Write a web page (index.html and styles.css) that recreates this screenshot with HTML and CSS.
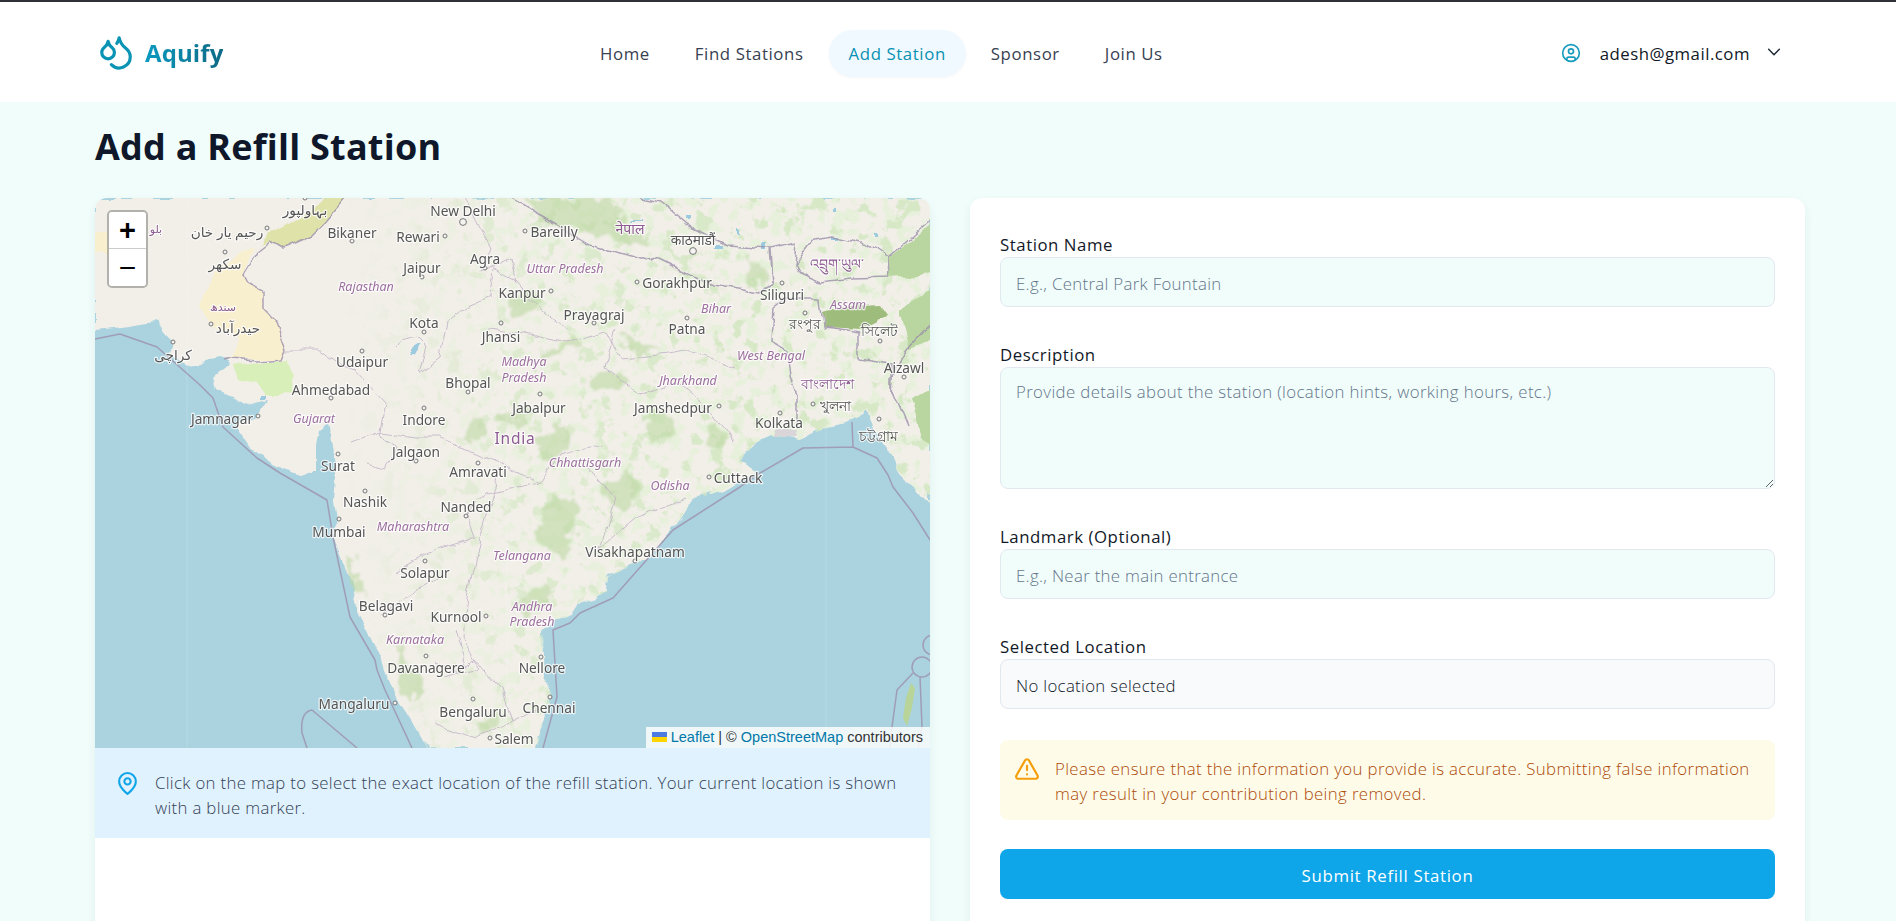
FILE: index.html
```html
<!DOCTYPE html>
<html lang="en">
<head>
<meta charset="utf-8">
<title>Aquify - Add a Refill Station</title>
<link rel="stylesheet" href="styles.css">
</head>
<body>
<header class="site-header">
  <a class="logo" href="#">
    <svg class="logo-icon" viewBox="0 0 24 24"><path d="M7 16.3c2.2 0 4-1.83 4-4.05 0-1.16-.57-2.26-1.71-3.19S7.29 6.75 7 5.3c-.29 1.45-1.14 2.84-2.29 3.76S3 11.1 3 12.25c0 2.22 1.8 4.05 4 4.05z"/><path d="M12.56 6.6A10.97 10.97 0 0 0 14 3.02c.5 2.5 2 4.9 4 6.5s3 3.5 3 5.5a6.98 6.98 0 0 1-11.91 4.97"/></svg>
    <span class="logo-text">Aquify</span>
  </a>
  <nav class="main-nav">
    <a href="#">Home</a>
    <a href="#">Find Stations</a>
    <a href="#" class="active">Add Station</a>
    <a href="#">Sponsor</a>
    <a href="#">Join Us</a>
  </nav>
  <div class="user">
    <svg class="user-icon" viewBox="0 0 24 24"><circle cx="12" cy="12" r="10"/><circle cx="12" cy="10" r="3"/><path d="M7 20.662V19a2 2 0 0 1 2-2h6a2 2 0 0 1 2 2v1.662"/></svg>
    <span class="user-mail">adesh@gmail.com</span>
    <svg class="chevron" viewBox="0 0 24 24"><path d="m4 8 8 8 8-8"/></svg>
  </div>
</header>

<main class="page">
  <h1>Add a Refill Station</h1>
  <div class="columns">
    <section class="card map-card">
      <div class="map">
        <svg class="map-art" viewBox="0 0 835 550" width="835" height="550">
          <defs>
            <clipPath id="land-clip"><path d="M0 132 28 129 52 125 62 124 70 137 77 144 72 158 92 167 128 160 135 167 120 180 123 192 152 207 173 202 165 218 140 226 155 248 180 268 205 276 222 270 222 248 225 232 233 226 236 245 243 262 243 278 242 282 240 302 243 322 238 335 248 362 258 395 262 412 278 445 288 462 295 485 305 505 322 532 332 550 442 550 448 525 457 499 450 479 448 435 460 422 473 419 482 405 512 394 513 379 535 369 552 359 582 325 598 302 628 292 648 280 660 272 645 262 660 245 675 238 705 242 718 235 762 220 772 210 778 227 795 250 802 272 815 285 835 305 835 0 0 0Z"/></clipPath>
            <filter id="rough" filterUnits="userSpaceOnUse" x="-20" y="-20" width="875" height="590">
              <feTurbulence type="fractalNoise" baseFrequency=".035" numOctaves="4" seed="3" result="n"/>
              <feDisplacementMap in="SourceGraphic" in2="n" scale="11" xChannelSelector="R" yChannelSelector="G"/>
            </filter>
            <filter id="organic" filterUnits="userSpaceOnUse" x="-20" y="-20" width="875" height="590">
              <feTurbulence type="fractalNoise" baseFrequency=".06" numOctaves="4" seed="8" result="n"/>
              <feDisplacementMap in="SourceGraphic" in2="n" scale="26" xChannelSelector="R" yChannelSelector="G"/>
              <feGaussianBlur stdDeviation=".8"/>
            </filter>
            <filter id="mottle" x="0" y="0" width="100%" height="100%">
              <feTurbulence type="fractalNoise" baseFrequency=".08" numOctaves="5" seed="11"/>
              <feColorMatrix type="matrix" values="0 0 0 0 .79  0 0 0 0 .87  0 0 0 0 .70  9 0 0 0 -4.75"/>
            </filter>
            <filter id="mottle-dark" x="0" y="0" width="100%" height="100%">
              <feTurbulence type="fractalNoise" baseFrequency=".06" numOctaves="5" seed="29"/>
              <feColorMatrix type="matrix" values="0 0 0 0 .68  0 0 0 0 .81  0 0 0 0 .57  10 0 0 0 -5.9"/>
            </filter>
            <linearGradient id="east-fade" x1="0" x2="1" y1="0" y2="0">
              <stop offset=".3" stop-color="#fff" stop-opacity=".02"/>
              <stop offset=".5" stop-color="#fff" stop-opacity=".75"/>
              <stop offset=".75" stop-color="#fff" stop-opacity="1"/>
            </linearGradient>
            <mask id="east-mask"><rect width="835" height="550" fill="url(#east-fade)"/></mask>
          </defs>

          <rect class="sea" width="835" height="550"/>

          <g filter="url(#rough)">
            <path class="land-fill" d="M0 132 28 129 52 125 62 124 70 137 77 144 72 158 92 167 128 160 135 167 120 180 123 192 152 207 173 202 165 218 140 226 155 248 180 268 205 276 222 270 222 248 225 232 233 226 236 245 243 262 243 278 242 282 240 302 243 322 238 335 248 362 258 395 262 412 278 445 288 462 295 485 305 505 322 532 332 550 442 550 448 525 457 499 450 479 448 435 460 422 473 419 482 405 512 394 513 379 535 369 552 359 582 325 598 302 628 292 648 280 660 272 645 262 660 245 675 238 705 242 718 235 762 220 772 210 778 227 795 250 802 272 815 285 835 305 835 0 0 0Z"/>
          </g>

          <g clip-path="url(#land-clip)">
            <g mask="url(#east-mask)">
              <rect width="835" height="550" filter="url(#mottle)"/>
              <rect width="835" height="550" filter="url(#mottle-dark)"/>
            </g>
            <g class="patches" filter="url(#organic)">
              <path d="M413 95 440 90 442 110 415 118Z"/><path d="M445 155 480 140 487 148 448 162Z"/>
              <path d="M495 180 530 172 535 185 500 192Z"/><path d="M405 218 435 210 432 222 402 228Z"/>
              <path d="M440 245 470 225 478 245 452 262Z"/><path d="M550 220 572 210 578 235 555 240Z"/>
              <path d="M610 230 628 226 630 245 614 250Z"/><path d="M372 232 395 220 390 238 368 242Z"/>
              <path d="M445 315 475 295 484 325 468 360 445 345Z"/><path d="M505 295 535 268 545 295 522 320Z"/>
              <path d="M302 445 316 470 328 500 320 505 302 470Z"/>
              <path d="M380 525 400 510 410 520 390 535Z"/><path d="M425 0H515L555 48 500 38 450 20Z"/>
              <path d="M565 65 640 90 600 80Z"/><path d="M658 62 676 80 652 88Z"/>
              <path d="M425 400 448 385 455 405 432 425Z"/><path d="M258 358 270 392 262 396 254 365Z"/>
              <path d="M525 138 565 150 540 160Z"/>
            </g>
          </g>

          <g filter="url(#rough)">
            <path class="olive" d="M229 0H252L228 27 215 40 188 52 175 44 165 47 175 34 208 17Z"/>
            <path class="sand" d="M158 47 148 77 152 85 168 94 168 110 182 124 193 150 188 160 135 160 145 140 115 124 105 107 115 87 118 77 142 57Z"/>
            <path class="sand" d="M0 34H14V56H0Z"/>
            <path class="lime" d="M138 167 195 160 198 194 182 198 170 198 160 184 142 180Z"/>
            <path class="forest" d="M793 60 840 22V76L793 79Z"/>
            <path class="forest-d" d="M728 114 740 110 785 107 792 117 765 131 728 129Z"/>
            <path class="forest" d="M840 90 805 112 815 150 840 140Z"/>
            <path class="forest" d="M815 200 840 190V250L825 240Z"/>
            <path class="delta" d="M680 232 700 232 698 240 678 240Z"/>
            <g class="water">
              <path d="M590 18h5v4h-5zM640 30h3v4h-3zM535 20h10v2h-10zM622 47h6v4h-6zM668 44h4v8h-4zM736 37h8v3h-8zM782 35h3v4h-3zM737 12h4v3h-4z"/>
              <path d="M317 150c5-6 9-5 7 2s-7 8-7-2zM165 198h6v3h-6z"/>
            </g>
            <g class="borders land-borders">
              <path d="M252 -1 228 27 215 40 188 52 175 44 162 54 148 77 152 85 168 94 168 110 182 124 192 150 188 160 162 162 135 160 127 162"/>
              <path d="M412 0 448 20 495 47 558 64 565 60 618 87 665 95 678 87 675 50 632 47 592 27 565 4 545 0"/>
              <path d="M698 67 718 40 738 37 768 44 792 60 793 79 758 80 725 84 702 74ZM792 60 835 22M678 87 676 50 700 44 698 67"/>
              <path d="M677 110 690 100 725 100 728 129 765 134 765 160 798 165 798 197 812 230M677 110 675 144 692 154 695 177 702 197 702 230"/>
              <path d="M835 125 812 150 800 170 798 197"/>
            </g>
            <g class="state-borders">
              <path d="M192 152 222 152 240 165 260 172 290 205 284 240 302 250 290 270 270 265"/>
              <path d="M300 150 307 142 320 138 332 150 325 175 345 160 352 125 372 110 395 100 398 70 420 82 445 110 470 130"/>
              <path d="M395 130 440 138 470 145 510 132 525 160 575 155 590 152 640 170"/>
              <path d="M520 130 510 170 545 195 585 185 615 210 640 245"/>
              <path d="M420 85 415 60 385 75 395 50 385 30 370 0"/>
              <path d="M258 245 285 235 320 240 345 240 405 265 445 285 465 255 505 245"/>
              <path d="M300 375 345 350 380 340 372 315 390 295 445 285"/>
              <path d="M405 270 385 340 372 400 368 440 385 470 350 480"/>
              <path d="M285 415 345 380M360 432 372 470"/>
              <path d="M495 270 520 300 505 350 540 320 590 300"/>
              <path d="M340 465 365 475 380 460 405 490 415 525 445 510"/>
              <path d="M340 525 380 540 415 525"/>
            </g>
          </g>

          <g class="borders">
            <path d="M0 141 25 136 62 149 105 187 118 200 128 229 162 260 185 275 232 302 238 339 255 419 280 462 282 472 290 492 317 550"/>
            <path d="M262 550 217 512Q205 514 207 535L212 550"/>
            <path d="M448 550 462 499 458 432 475 425 485 415 518 400 578 332 645 289 665 275 708 250 758 249 782 260 793 277 798 289 818 315 835 342M757 224 758 249"/>
            <path d="M795 550 797 529 802 492 818 475M825 479 827 529 823 550"/>
            <circle cx="827" cy="469" r="10"/><circle cx="838" cy="447" r="10"/>
          </g>
          <path class="seam" d="M92 0V550M412 0V550M731 0V550"/>
          <path class="island" d="M816 485 820 490 817 510 812 528 808 520 811 500Z"/>

          <g class="dots">
            <circle cx="368" cy="24" r="3.4"/><circle cx="257" cy="43" r="2"/><circle cx="350" cy="38" r="2"/><circle cx="430" cy="33" r="2"/><circle cx="390" cy="70" r="2"/><circle cx="327" cy="79" r="2"/><circle cx="456" cy="93" r="2"/><circle cx="542" cy="84" r="2"/><circle cx="598" cy="53" r="3.4"/><circle cx="687" cy="85" r="2"/><circle cx="710" cy="115" r="2"/><circle cx="785" cy="143" r="2"/><circle cx="499" cy="125" r="2"/><circle cx="592" cy="120" r="2"/><circle cx="329" cy="134" r="2"/><circle cx="406" cy="125" r="2"/><circle cx="116" cy="126" r="2"/><circle cx="78" cy="144" r="2"/><circle cx="130" cy="54" r="2"/><circle cx="172" cy="30" r="2"/><circle cx="210" cy="0" r="2"/><circle cx="267" cy="153" r="2"/><circle cx="373" cy="194" r="2"/><circle cx="236" cy="200" r="2"/><circle cx="809" cy="179" r="2"/><circle cx="718" cy="206" r="2"/><circle cx="624" cy="208" r="2"/><circle cx="445" cy="196" r="2"/><circle cx="685" cy="215" r="2"/><circle cx="784" cy="221" r="2"/><circle cx="163" cy="218" r="2"/><circle cx="329" cy="210" r="2"/><circle cx="321" cy="263" r="2"/><circle cx="383" cy="265" r="2"/><circle cx="243" cy="256" r="2"/><circle cx="614" cy="279" r="2"/><circle cx="270" cy="293" r="2"/><circle cx="371" cy="318" r="2"/><circle cx="244" cy="321" r="2"/><circle cx="540" cy="363" r="2"/><circle cx="330" cy="363" r="2"/><circle cx="290" cy="417" r="2"/><circle cx="391" cy="418" r="2"/><circle cx="331" cy="458" r="2"/><circle cx="446" cy="459" r="2"/><circle cx="300" cy="505" r="2"/><circle cx="378" cy="501" r="2"/><circle cx="455" cy="499" r="2"/><circle cx="395" cy="540" r="2"/>
          </g>

          <g class="city">
            <text x="368" y="12">New Delhi</text><text x="257" y="34">Bikaner</text><text x="323" y="38">Rewari</text><text x="459" y="33">Bareilly</text><text x="390" y="60">Agra</text><text x="327" y="69">Jaipur</text><text x="427" y="94">Kanpur</text><text x="582" y="84">Gorakhpur</text><text x="598" y="41">काठमाडौं</text><text x="687" y="96">Siliguri</text><text x="710" y="125">রংপুর</text><text x="784" y="132">সিলেট</text><text x="499" y="116">Prayagraj</text><text x="592" y="130">Patna</text><text x="329" y="124">Kota</text><text x="406" y="138">Jhansi</text><text x="143" y="129">حیدرآباد</text><text x="78" y="156">کراچی</text><text x="130" y="65">سکھر</text><text x="132" y="33">رحیم یار خان</text><text x="210" y="11">بہاولپور</text><text x="267" y="163">Udaipur</text><text x="373" y="184">Bhopal</text><text x="236" y="191">Ahmedabad</text><text x="809" y="169">Aizawl</text><text x="740" y="207">খুলনা</text><text x="578" y="209">Jamshedpur</text><text x="444" y="209">Jabalpur</text><text x="684" y="224">Kolkata</text><text x="783" y="237">চট্টগ্রাম</text><text x="127" y="220">Jamnagar</text><text x="329" y="221">Indore</text><text x="321" y="253">Jalgaon</text><text x="383" y="273">Amravati</text><text x="243" y="267">Surat</text><text x="643" y="279">Cuttack</text><text x="270" y="303">Nashik</text><text x="371" y="308">Nanded</text><text x="244" y="333">Mumbai</text><text x="540" y="353">Visakhapatnam</text><text x="330" y="374">Solapur</text><text x="291" y="407">Belagavi</text><text x="361" y="418">Kurnool</text><text x="331" y="469">Davanagere</text><text x="447" y="469">Nellore</text><text x="259" y="505">Mangaluru</text><text x="378" y="513">Bengaluru</text><text x="454" y="509">Chennai</text><text x="419" y="540">Salem</text>
          </g>
          <g class="state">
            <text x="271" y="88">Rajasthan</text><text x="470" y="70">Uttar Pradesh</text><text x="621" y="110">Bihar</text><text x="753" y="106">Assam</text><text x="676" y="157">West Bengal</text><text x="429" y="163">Madhya</text><text x="429" y="179">Pradesh</text><text x="593" y="182">Jharkhand</text><text x="219" y="220">Gujarat</text><text x="490" y="264">Chhattisgarh</text><text x="575" y="287">Odisha</text><text x="318" y="328">Maharashtra</text><text x="427" y="357">Telangana</text><text x="437" y="408">Andhra</text><text x="437" y="423">Pradesh</text><text x="320" y="441">Karnataka</text>
          </g>
          <g class="country">
            <text x="420" y="240" class="india">India</text><text x="535" y="30">नेपाल</text><text x="742" y="65">འབྲུག་ཡུལ་</text><text x="732" y="185">বাংলাদেশ</text><text x="128" y="108" class="small">سندھ</text><text x="61" y="30" class="small">بلو</text>
          </g>
        </svg>

        <div class="zoom-control">
          <a href="#" class="zoom-in">+</a>
          <a href="#" class="zoom-out">−</a>
        </div>

        <div class="attribution"><svg class="flag" viewBox="0 0 15 10"><rect width="15" height="5" fill="#4c7be1"/><rect y="5" width="15" height="5" fill="#ffd500"/></svg> <a href="#">Leaflet</a> | © <a href="#">OpenStreetMap</a> contributors</div>
      </div>
      <div class="map-hint">
        <svg class="pin" viewBox="0 0 24 24"><path d="M20 10c0 6-8 12-8 12s-8-6-8-12a8 8 0 0 1 16 0Z"/><circle cx="12" cy="10" r="3"/></svg>
        <p>Click on the map to select the exact location of the refill station. Your current location is shown with a blue marker.</p>
      </div>
    </section>

    <section class="card form-card">
      <form>
        <div class="field">
          <label for="name">Station Name</label>
          <input id="name" type="text" placeholder="E.g., Central Park Fountain">
        </div>
        <div class="field">
          <label for="desc">Description</label>
          <textarea id="desc" placeholder="Provide details about the station (location hints, working hours, etc.)"></textarea>
        </div>
        <div class="field">
          <label for="landmark">Landmark (Optional)</label>
          <input id="landmark" type="text" placeholder="E.g., Near the main entrance">
        </div>
        <div class="field field-location">
          <label>Selected Location</label>
          <div class="location-box">No location selected</div>
        </div>
        <div class="warning">
          <svg class="warn-icon" viewBox="0 0 24 24"><path d="m21.73 18-8-14a2 2 0 0 0-3.48 0l-8 14A2 2 0 0 0 4 21h16a2 2 0 0 0 1.73-3"/><path d="M12 9v4"/><path d="M12 17h.01"/></svg>
          <p>Please ensure that the information you provide is accurate. Submitting false information may result in your contribution being removed.</p>
        </div>
        <button type="button" class="submit">Submit Refill Station</button>
      </form>
    </section>
  </div>
</main>
</body>
</html>
```

FILE: styles.css
```css
* { box-sizing: border-box; }
html, body { margin: 0; height: 921px; overflow: hidden; }
body {
  background: #f0fdfb;
  color: #111827;
  font-family: "Open Sans", "Noto Sans", sans-serif;
  font-size: 16.8px;
  letter-spacing: .33px;
  border-top: 2px solid #2f3136;
}
a { text-decoration: none; color: inherit; }
p { margin: 0; }

.site-header {
  height: 100px;
  background: #fff;
  display: flex;
  align-items: center;
  padding: 0 114px 0 97px;
}
.logo { display: flex; align-items: center; gap: 10px; width: 127px; }
.logo-icon { width: 38px; height: 38px; fill: none; stroke: #0b93b4; stroke-width: 2; stroke-linecap: round; stroke-linejoin: round; }
.logo-text {
  font-size: 24px; font-weight: 700; letter-spacing: .1px;
  background: linear-gradient(90deg, #0a9ac0, #0e6a85);
  -webkit-background-clip: text; background-clip: text; color: transparent;
}
.main-nav { display: flex; gap: 5px; margin: 3px auto 0 356px; font-weight: 500; color: #374151; letter-spacing: .6px; }
.main-nav a { height: 47px; padding: 0 20px; border-radius: 24px; display: flex; align-items: center; }
.main-nav a.active { color: #0891b2; background: #f0f9ff; box-shadow: 0 1px 3px rgba(0,0,0,.04); }
.user { display: flex; align-items: center; font-weight: 500; color: #111827; margin-top: 3px; letter-spacing: .5px; }
.user-icon { width: 20px; height: 20px; fill: none; stroke: #1a9dbd; stroke-width: 2; stroke-linecap: round; stroke-linejoin: round; margin-bottom: 2px; }
.user-mail { margin-left: 19px; }
.chevron { width: 16px; height: 16px; margin-left: 16px; margin-bottom: 3px; fill: none; stroke: #1f2937; stroke-width: 2.2; stroke-linecap: round; stroke-linejoin: round; }

.page { padding: 25px 91px 0 95px; }
h1 { margin: 0 0 31px; font-size: 36px; line-height: 40px; font-weight: 700; color: #0f172a; letter-spacing: .22px; }
.columns { display: grid; grid-template-columns: 835px 835px; gap: 40px; }
.card { background: #fff; border-radius: 12px; overflow: hidden; box-shadow: 0 4px 10px rgba(15,60,70,.07); height: 760px; }

.map { position: relative; height: 550px; overflow: hidden; letter-spacing: 0; }
.map-art { display: block; filter: blur(.45px); }
.sea { fill: #aad3df; }
.land-fill { fill: #f2efe9; }
.olive { fill: #dfe3a9; }
.sand { fill: #f8efcf; }
.lime { fill: #d8efb9; }
.forest { fill: #b9d6a0; }
.forest-d { fill: #9ebd7d; }
.patches { fill: #bcd8a2; opacity: .6; }
.water { fill: #9ccbe0; }
.delta { fill: #d9d5d9; }
.island { fill: #b8d498; }
.borders { fill: none; stroke: #9d90ac; stroke-width: 1.5; stroke-linejoin: round; opacity: .8; }
.state-borders { fill: none; stroke: #c2b4c8; stroke-width: 1; stroke-linejoin: round; opacity: .85; }
.seam { stroke: rgba(255,255,255,.14); stroke-width: 1; fill: none; }
.dots { fill: #f5f3ef; stroke: #77777a; stroke-width: 1; }
.city text, .state text, .country text {
  text-anchor: middle; dominant-baseline: central;
  paint-order: stroke; stroke: rgba(255,255,255,.75); stroke-width: 2.4px; stroke-linejoin: round;
}
.city text { font: 13.7px "Noto Sans", "DejaVu Sans", sans-serif; fill: #555; }
.state text { font: italic 12.5px "Noto Sans", sans-serif; fill: #9c6f9f; }
.country text { font: 14px "Noto Sans", "DejaVu Sans", sans-serif; fill: #8d5a92; }
.country .india { font-size: 15.5px; letter-spacing: .8px; }
.country .small { font-size: 11px; }

.zoom-control {
  position: absolute; left: 12px; top: 12px; width: 41px;
  border: 2px solid rgba(0,0,0,.26); border-radius: 5px; background-clip: padding-box;
  font-family: "Liberation Sans", sans-serif; color: #000;
}
.zoom-control a {
  display: flex; align-items: center; justify-content: center;
  height: 37px; background: #fff; line-height: 1;
}
.zoom-in { border-bottom: 1px solid #ccc; border-radius: 3px 3px 0 0; font-size: 29px; font-weight: 700; }
.zoom-out { border-radius: 0 0 3px 3px; font-size: 30px; font-weight: 400; }

.attribution {
  position: absolute; right: 0; bottom: 0; height: 21px;
  padding: 0 7px 0 6px; white-space: nowrap;
  background: rgba(255,255,255,.82);
  font: 14.5px/21px "Liberation Sans", sans-serif; color: #333;
}
.attribution a { color: #0078a8; }
.flag { display: inline-block; width: 15px; height: 10px; }

.map-hint {
  height: 90px; background: #e0f2fe;
  display: flex; align-items: flex-start; gap: 15px;
  padding: 22px 25px 0 20px;
  color: #334155; font-weight: 300; line-height: 25px;
}
.pin { flex: none; width: 25px; height: 25px; margin-top: 1px; fill: none; stroke: #0ea5e9; stroke-width: 2; stroke-linecap: round; stroke-linejoin: round; }

.form-card { padding: 35px 30px; }
.field { margin-bottom: 36px; }
.field label { display: block; height: 24px; line-height: 24px; font-weight: 500; color: #111827; letter-spacing: .55px; }
.field input, .field textarea, .location-box {
  display: block; width: 100%; height: 50px; padding: 3px 15px 0;
  border: 1.5px solid #e2e8f0; border-radius: 8px;
  background: #f0fdfa; color: #111827;
  font: 300 16.8px "Open Sans", "Noto Sans", sans-serif; letter-spacing: .33px; outline: none;
}
.field textarea { height: 122px; padding-top: 12px; line-height: 24px; letter-spacing: .38px; }
::placeholder { color: #64748b; opacity: 1; }
.location-box { background: #f8fafc; display: flex; align-items: center; }
.field-location { margin-bottom: 31px; }

.warning {
  height: 80px; background: #fefbe8; border-radius: 8px;
  display: flex; align-items: flex-start; gap: 15px;
  padding: 16px 20px 0 14px;
  color: #ad4a08; font-weight: 300; line-height: 25px; letter-spacing: .38px;
}
.warn-icon { flex: none; width: 26px; height: 26px; fill: none; stroke: #f59e0b; stroke-width: 2; stroke-linecap: round; stroke-linejoin: round; }
.submit {
  display: block; width: 100%; height: 50px; margin-top: 29px; padding-top: 3px;
  border: 0; border-radius: 8px; background: #0ea5e9; color: #fff;
  font: 500 16.8px "Open Sans", "Noto Sans", sans-serif; letter-spacing: .68px;
}
```
